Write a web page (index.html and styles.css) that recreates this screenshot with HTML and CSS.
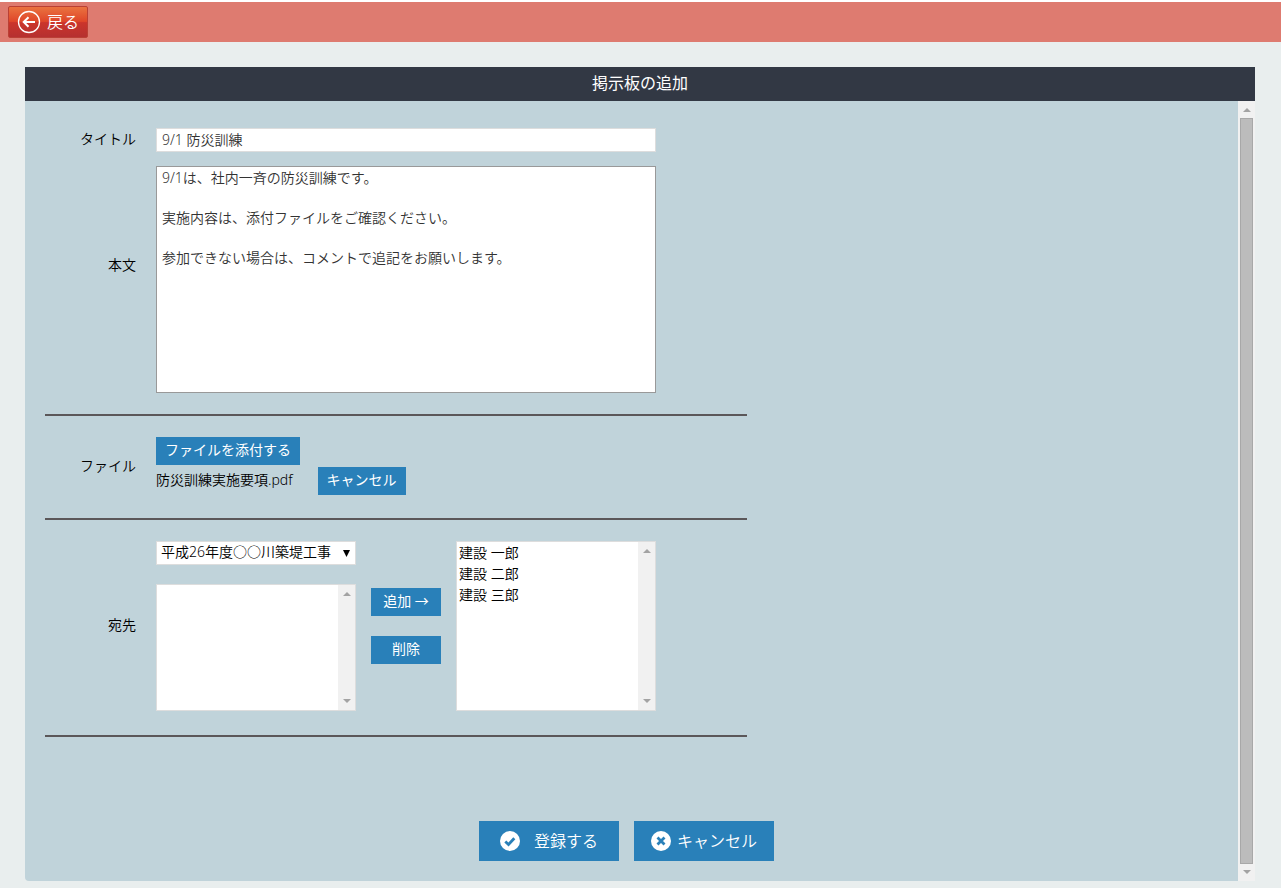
FILE: index.html
```html
<!DOCTYPE html>
<html lang="ja">
<head>
<meta charset="utf-8">
<meta name="viewport" content="width=device-width, initial-scale=1">
<title>掲示板の追加</title>
<link rel="stylesheet" href="styles.css">
</head>
<body>
<header class="topbar">
  <button type="button" class="back">
    <svg class="back-icon" viewBox="0 0 24 24" aria-hidden="true"><circle cx="12" cy="12" r="10.5"/><path d="M18 12H7M11.5 7.2 6.7 12l4.8 4.8"/></svg>
    <span>戻る</span>
  </button>
</header>

<main class="panel">
  <h1 class="panel-title">掲示板の追加</h1>
  <div class="panel-body">
    <form class="content">
      <section class="group">
        <div class="row">
          <label class="label" for="title">タイトル</label>
          <input class="text-input" id="title" type="text" value="9/1 防災訓練">
        </div>
        <div class="row">
          <label class="label label-body" for="body">本文</label>
          <textarea class="text-area" id="body">9/1は、社内一斉の防災訓練です。

実施内容は、添付ファイルをご確認ください。

参加できない場合は、コメントで追記をお願いします。</textarea>
        </div>
      </section>

      <section class="group">
        <div class="row">
          <label class="label" for="attach">ファイル</label>
          <div class="files">
            <button type="button" class="btn" id="attach">ファイルを添付する</button>
            <div class="file">
              <span class="file-name">防災訓練実施要項.pdf</span>
              <button type="button" class="btn">キャンセル</button>
            </div>
          </div>
        </div>
      </section>

      <section class="group group-last">
        <div class="row">
          <label class="label" for="project">宛先</label>
          <div class="recipients">
            <div class="source">
              <div class="dropdown">
                <select id="project"><option>平成26年度○○川築堤工事</option></select>
                <svg class="caret" viewBox="0 0 7 7" aria-hidden="true"><path d="M0 0h7L3.5 7z"/></svg>
              </div>
              <div class="listbox">
                <select multiple aria-label="候補"></select>
                <div class="scroll">
                  <svg class="arrow" viewBox="0 0 8 4" aria-hidden="true"><path d="M0 4h8L4 0z"/></svg>
                  <svg class="arrow" viewBox="0 0 8 4" aria-hidden="true"><path d="M0 0h8L4 4z"/></svg>
                </div>
              </div>
            </div>
            <div class="transfer">
              <button type="button" class="btn">追加 →</button>
              <button type="button" class="btn">削除</button>
            </div>
            <div class="listbox">
              <select multiple aria-label="宛先一覧">
                <option>建設 一郎</option>
                <option>建設 二郎</option>
                <option>建設 三郎</option>
              </select>
              <div class="scroll">
                <svg class="arrow" viewBox="0 0 8 4" aria-hidden="true"><path d="M0 4h8L4 0z"/></svg>
                <svg class="arrow" viewBox="0 0 8 4" aria-hidden="true"><path d="M0 0h8L4 4z"/></svg>
              </div>
            </div>
          </div>
        </div>
      </section>

      <div class="actions">
        <button type="submit" class="action action-submit">
          <svg class="action-icon" viewBox="0 0 20 20" aria-hidden="true"><circle cx="10" cy="10" r="10"/><path d="m5.3 10.6 3.2 3 5.8-6.4"/></svg>
          <span>登録する</span>
        </button>
        <button type="button" class="action">
          <svg class="action-icon" viewBox="0 0 20 20" aria-hidden="true"><circle cx="10" cy="10" r="10"/><path d="m6.5 6.5 7 7M13.5 6.5l-7 7"/></svg>
          <span>キャンセル</span>
        </button>
      </div>
    </form>
    <div class="scroll scroll-page">
      <svg class="arrow" viewBox="0 0 8 4" aria-hidden="true"><path d="M0 4h8L4 0z"/></svg>
      <div class="thumb"></div>
      <svg class="arrow" viewBox="0 0 8 4" aria-hidden="true"><path d="M0 0h8L4 4z"/></svg>
    </div>
  </div>
</main>
</body>
</html>
```
FILE: styles.css
```css
*,
*::before,
*::after {
  box-sizing: border-box;
}

body {
  display: flex;
  flex-direction: column;
  min-height: 100vh;
  margin: 0;
  background: #e9eeee;
  color: #000;
  font: 350 14px/20px "Noto Sans", "Noto Sans CJK JP", sans-serif;
}

button,
input,
textarea,
select {
  margin: 0;
  border-radius: 0;
  font: inherit;
}

button {
  cursor: pointer;
}

.topbar {
  padding: 4px 8px;
  border-top: 2px solid #fff;
  background: #de7b70;
}

.back {
  display: flex;
  align-items: center;
  gap: 6px;
  height: 32px;
  padding: 0 8px 1px;
  border: 1px solid #bb4035;
  border-radius: 2px;
  background: linear-gradient(#ea7340, #df4629 48%, #cb352b 52%, #b53030);
  color: #fff;
  font-size: 16px;
}

.back-icon {
  width: 24px;
  height: 24px;
  fill: none;
  stroke: #fff;
  stroke-width: 1.3;
}

.back-icon path {
  stroke-width: 2;
}

.panel {
  display: flex;
  flex: 1;
  flex-direction: column;
  margin: 25px 26px 7px 25px;
}

.panel-title {
  margin: 0;
  padding-bottom: 2px;
  background: #323844;
  color: #fff;
  font-size: 16px;
  font-weight: 400;
  line-height: 32px;
  text-align: center;
}

.panel-body {
  display: flex;
  flex: 1;
  overflow: hidden;
  border-radius: 0 0 0 4px;
  background: #c0d3da;
}

.content {
  flex: 1;
  padding: 6px 20px 20px;
}

.group {
  display: flex;
  flex-direction: column;
  gap: 14px;
  max-width: 702px;
  padding: 21px 0;
  border-bottom: 2px solid #5b5759;
}

.group-last {
  padding-bottom: 24px;
}

.row {
  display: grid;
  grid-template-columns: 91px 1fr;
  align-items: center;
  column-gap: 20px;
}

.label {
  padding-bottom: 2px;
  text-align: right;
}

.label-body {
  padding-bottom: 30px;
}

.text-input,
.text-area {
  width: 100%;
  max-width: 500px;
  padding: 0 5px 2px;
  background: #fff;
  color: #333;
}

.text-input {
  height: 24px;
  border: 1px solid #ddd;
}

.text-area {
  display: block;
  height: 227px;
  padding-top: 1px;
  border: 1px solid #999;
  resize: none;
}

.btn {
  height: 28px;
  padding: 0 9px 2px;
  border: 0;
  background: #2980b9;
  color: #fff;
  font-weight: 400;
}

.files {
  display: flex;
  flex-direction: column;
  align-items: flex-start;
  gap: 2px;
}

.file {
  display: flex;
  gap: 25px;
  padding-bottom: 2px;
}

.file-name {
  padding-top: 3px;
}

.recipients {
  display: flex;
  gap: 15px;
  height: 170px;
}

.source {
  display: flex;
  flex-direction: column;
  gap: 19px;
  width: 200px;
}

.dropdown {
  position: relative;
}

.dropdown select {
  display: block;
  width: 100%;
  height: 24px;
  padding: 0 18px 2px 4px;
  border: 1px solid #ddd;
  appearance: none;
  background: #fff;
  color: #000;
}

.caret {
  position: absolute;
  top: 9px;
  right: 6px;
  width: 7px;
  height: 7px;
  pointer-events: none;
}

.listbox {
  display: flex;
  flex: 1;
  width: 200px;
  max-width: 200px;
  border: 1px solid #ddd;
  background: #fff;
}

.listbox select {
  flex: 1;
  min-width: 0;
  padding: 0;
  border: 0;
  appearance: none;
  background: #fff;
  color: #000;
  overflow: hidden;
}

.listbox option {
  display: block;
  height: 21px;
  min-height: 21px;
  padding: 0 2px;
  font: inherit;
  line-height: 16px;
}

.transfer {
  display: flex;
  flex-direction: column;
  justify-content: center;
  gap: 20px;
  width: 70px;
}

.scroll {
  display: flex;
  flex-direction: column;
  align-items: center;
  justify-content: space-between;
  width: 17px;
  padding: 7px 0;
  background: #f1f1f1;
}

.arrow {
  width: 8px;
  height: 4px;
  fill: #a3a3a3;
}

.thumb {
  flex: 1;
  width: 13px;
  margin: 6px 0;
  border: 1px solid #a8a8a8;
  background: #bcbcbc;
}

.actions {
  display: flex;
  justify-content: center;
  gap: 15px;
  margin-top: 84px;
  padding-right: 10px;
}

.action {
  display: flex;
  align-items: center;
  justify-content: center;
  gap: 6px;
  width: 140px;
  height: 40px;
  padding: 0 0 1px;
  border: 0;
  background: #2980b9;
  color: #fff;
  font-size: 16px;
}

.action-submit {
  gap: 14px;
}

.action-icon {
  width: 20px;
  height: 20px;
  fill: #fff;
}

.action-icon path {
  fill: none;
  stroke: #2980b9;
  stroke-width: 2.8;
}
```
